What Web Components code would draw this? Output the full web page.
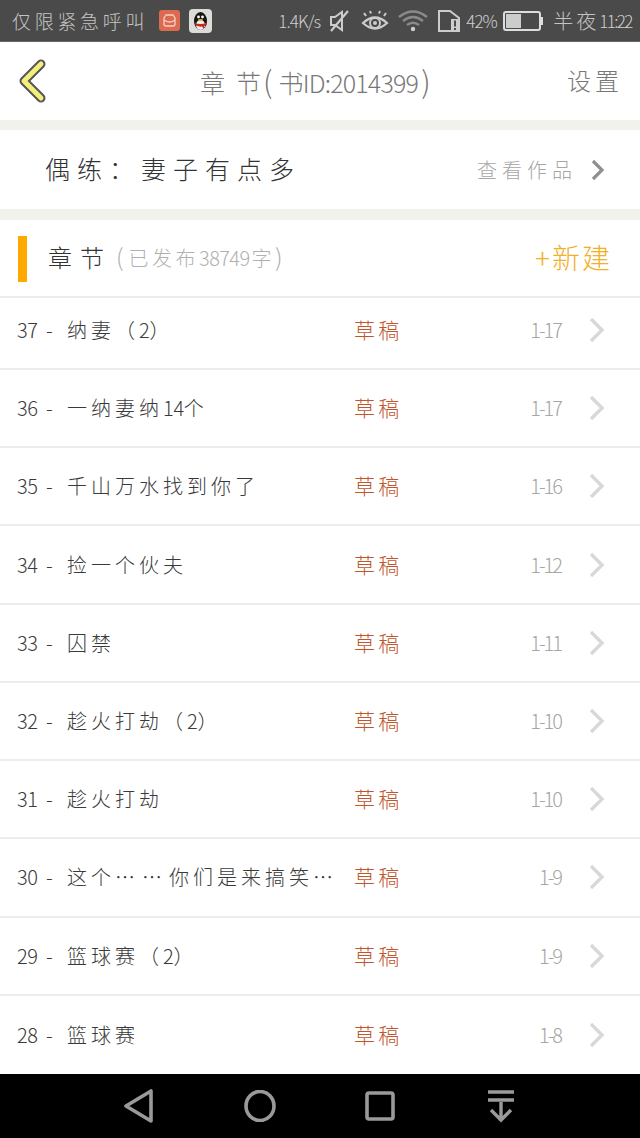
<!DOCTYPE html>
<html lang="zh"><head><meta charset="utf-8">
<style>
html,body{margin:0;padding:0;background:#fff}
body{width:640px;height:1138px;overflow:hidden;display:flex;flex-direction:column;font-family:"Noto Sans CJK SC","Noto Sans",sans-serif;font-weight:300}
chapter-list{flex:1}
</style></head><body>
<status-bar></status-bar>
<nav-header></nav-header>
<book-card></book-card>
<section-head></section-head>
<chapter-list>
<chapter-row class="first" num="37" name="纳妻&#xFF08;2&#xFF09;" range="1-17"></chapter-row>
<chapter-row num="36" name="一纳妻纳14个" range="1-17"></chapter-row>
<chapter-row num="35" name="千山万水找到你了" range="1-16"></chapter-row>
<chapter-row num="34" name="捡一个伙夫" range="1-12"></chapter-row>
<chapter-row num="33" name="囚禁" range="1-11"></chapter-row>
<chapter-row num="32" name="趁火打劫&#xFF08;2&#xFF09;" range="1-10"></chapter-row>
<chapter-row num="31" name="趁火打劫" range="1-10"></chapter-row>
<chapter-row num="30" name="这个……你们是来搞笑…" range="1-9"></chapter-row>
<chapter-row num="29" name="篮球赛&#xFF08;2&#xFF09;" range="1-9"></chapter-row>
<chapter-row num="28" name="篮球赛" range="1-8"></chapter-row>
</chapter-list>
<soft-keys></soft-keys>
<script>
function def(name,html){customElements.define(name,class extends HTMLElement{
  constructor(){super();this.attachShadow({mode:'open'});if(typeof html!=='function')this.shadowRoot.innerHTML=html}
  connectedCallback(){if(typeof html==='function')this.shadowRoot.innerHTML=html(this)}
})}
def('status-bar',`<style>
:host{display:flex;align-items:center;height:42px;box-sizing:border-box;background:#4a4a4a;border-bottom:1px solid #666;color:#cfcfcf;font-size:17px;padding:0 0 0 12px;flex:none}
.t{font-size:19px;letter-spacing:3.700px;white-space:nowrap;color:#c4c4c4}
svg{display:block;flex:none}
.sp{letter-spacing:-.9px;white-space:nowrap}
</style>
<span class="t">仅限紧急呼叫</span>
<svg style="margin-left:11px" width="21" height="21" viewBox="0 0 21 21"><rect width="21" height="21" rx="3" fill="#dc6a50"/><path d="M5 8l2-3h7l2 3v6a2 2 0 0 1-2 2H7a2 2 0 0 1-2-2zM5 10q5.500 4 11 0" fill="none" stroke="#f6cfc4" stroke-width="1.300"/></svg>
<svg style="margin-left:9px" width="23" height="24" viewBox="0 0 23 24"><rect width="23" height="24" rx="4" fill="#dcdcd8"/><ellipse cx="11.500" cy="12" rx="6.500" ry="9" fill="#151515"/><ellipse cx="11.500" cy="16" rx="4.500" ry="5" fill="#eee"/><path d="M5 13.500q6.500 3 13 0l-.5 2.500-2.500 1v3l-2-2.500q-3 .5-6-1z" fill="#c8271f"/><circle cx="9.500" cy="8" r="1.400" fill="#fff"/><circle cx="13.500" cy="8" r="1.400" fill="#fff"/><ellipse cx="11.500" cy="11" rx="2.500" ry="1.100" fill="#e8b22e"/></svg>
<span class="sp" style="margin-left:66px;width:42px">1.4K/s</span>
<svg style="margin-left:8px" width="22" height="24" viewBox="0 0 22 24"><path d="M3 8h4l7-5v18l-7-5H3z" fill="none" stroke="#ccc" stroke-width="2"/><path d="M20 2L3 22" stroke="#ccc" stroke-width="2.200"/></svg>
<svg style="margin-left:11px" width="28" height="22" viewBox="0 0 28 22"><path d="M2 13q12-11 24 0q-12 11-24 0z" fill="none" stroke="#ccc" stroke-width="2.200"/><circle cx="14" cy="13" r="5" fill="none" stroke="#ccc" stroke-width="2"/><circle cx="14" cy="13" r="2" fill="#ccc"/><path d="M5 6L3 3M10 3.500L9 1M18 3.500L19 1M23 6l2-3" stroke="#ccc" stroke-width="2"/></svg>
<svg style="margin-left:9px" width="30" height="24" viewBox="0 0 30 24"><path d="M1 8q14-11 28 0M5 12q10-8 20 0M9 16q6-4.500 12 0" fill="none" stroke="#8a8a8a" stroke-width="2.500"/><circle cx="15" cy="20" r="2.200" fill="#ccc"/></svg>
<svg style="margin-left:10px" width="22" height="22" viewBox="0 0 22 22"><path d="M1 1h11l9 7v13H1z" fill="none" stroke="#ccc" stroke-width="2"/><rect x="13" y="9" width="8" height="12" fill="#ccc"/><path d="M17 10.500v6M17 18v2" stroke="#4a4a4a" stroke-width="2"/></svg>
<span class="sp" style="margin-left:6px;width:34px">42%</span>
<svg style="margin-left:3px" width="41" height="20" viewBox="0 0 41 20"><rect x="1" y="1" width="36" height="18" rx="2" fill="none" stroke="#ddd" stroke-width="2"/><rect x="3" y="3" width="15" height="14" fill="#ccc"/><rect x="38" y="6" width="2" height="8" fill="#ddd"/></svg>
<span class="t" style="margin-left:9px;font-size:20px;letter-spacing:3px">半夜</span><span class="sp" style="letter-spacing:-1.600px">11:22</span>`);

def('nav-header',`<style>
:host{display:grid;grid-template-columns:200px 1fr auto;align-items:center;height:78px;background:#fff;flex:none;color:#777}
svg{margin-left:17px;display:block}
.t{font-size:25px;white-space:nowrap;line-height:36px}
.a{letter-spacing:11px}
.p{font-size:30px;letter-spacing:6px;margin-left:2px}
.b{letter-spacing:-.8px}
.e{font-size:30px;margin-left:3px}
.s{font-size:24px;letter-spacing:4px;padding-right:17px;margin-top:-3px}
</style>
<svg width="32" height="46" viewBox="0 0 32 46"><path d="M24 6L7 23l17 17" fill="none" stroke="#555" stroke-width="9" stroke-linecap="round" stroke-linejoin="round"/><path d="M24 6L7 23l17 17" fill="none" stroke="#f5ee7a" stroke-width="5" stroke-linecap="round" stroke-linejoin="round"/></svg>
<span class="t"><span class="a">章</span>节<span class="p">(</span><span class="b">书ID:2014399</span><span class="e">)</span></span><span class="s">设置</span>`);

def('book-card',`<style>
:host{display:flex;align-items:center;height:79px;background:#fff;border-top:10px solid #f2f2ec;border-bottom:11px solid #f2f2ec;flex:none;padding-left:45px}
.n{font-size:25px;letter-spacing:7px;color:#333;white-space:nowrap;margin-top:-3px}
.m{margin-left:auto;font-size:20px;letter-spacing:5px;color:#a6a6a6;white-space:nowrap}
svg{margin:0 35px 0 14px;display:block}
</style><span class="n">偶练\uFF1A妻子有点多</span><span class="m">查看作品</span>
<svg width="14" height="22" viewBox="0 0 14 22"><path d="M2 2l9 9-9 9" fill="none" stroke="#909090" stroke-width="3.200"/></svg>`);

def('section-head',`<style>
:host{display:flex;align-items:center;height:76px;background:#fff;border-bottom:2px solid #ededed;flex:none;padding-left:18px}
i{width:9px;height:46px;background:#ffa800;display:block;margin-top:1px}
.h{margin-left:21px;font-size:24px;letter-spacing:8px;color:#333;white-space:nowrap;margin-top:-3px}
.c{margin-left:4px;font-size:20px;line-height:32px;color:#b0b0b0;white-space:nowrap;letter-spacing:3.500px;margin-top:-2px}
.c .o{font-size:24px;letter-spacing:5px}
.c b{font-weight:inherit;letter-spacing:-.6px;margin-right:2px}
.a{margin-left:auto;padding-right:28px;font-size:28px;letter-spacing:2px;color:#f2b028;white-space:nowrap;margin-top:-2px}
</style><i></i><span class="h">章节</span><span class="c"><span class="o">(</span>已发布<b>38749</b>字<span class="o">)</span></span><span class="a">+新建</span>`);

def('chapter-list',`<style>:host{display:block;background:#fff}</style><slot></slot>`);

def('chapter-row',el=>{
const nm=(el.getAttribute('name')||'').replace(/\d+/g,m=>`<span class="d">${m}</span>`).replace(/…/g,'<span class="e">…</span>');
return `<style>
:host{display:grid;grid-template-columns:337px 105px 102px 1fr;align-items:center;height:78.220px;box-sizing:border-box;border-bottom:2px solid #ededed;padding-left:17px;background:#fff}
:host(.first){height:72px;padding-bottom:6px}
:host(:last-child){border-bottom:0}
.n{font-size:20px;letter-spacing:4px;color:#3a3a3a;white-space:nowrap;overflow:hidden;margin-top:-1px}
.d{letter-spacing:-.4px}
.e{letter-spacing:7px}
.x{margin-left:2px}
.s{font-size:21px;letter-spacing:3.200px;color:#c0562c;white-space:nowrap;margin-top:-2px}
.r{font-size:20px;letter-spacing:-2px;color:#a6a6a6;text-align:right;white-space:nowrap;margin-top:-1px}
svg{display:block;margin-left:28px}
</style><span class="n"><span class="d">${el.getAttribute('num')||''}</span> - <span class="x">${nm}</span></span><span class="s">草稿</span><span class="r">${el.getAttribute('range')||''}</span>
<svg width="16" height="26" viewBox="0 0 16 26"><path d="M2 2l11 11L2 24" fill="none" stroke="#d8d8d8" stroke-width="3.400"/></svg>`});

def('soft-keys',`<style>
:host{display:flex;align-items:center;height:65px;background:#000;flex:none;padding-left:124px}
svg{display:block;flex:none}
</style>
<svg width="30" height="34" viewBox="0 0 30 34"><path d="M27 2v30L2 17z" fill="none" stroke="#9a9a9a" stroke-width="3.600" stroke-linejoin="round"/></svg>
<svg style="margin-left:90px" width="32" height="32" viewBox="0 0 32 32"><ellipse cx="16" cy="16" rx="14" ry="14.500" fill="none" stroke="#9a9a9a" stroke-width="3.600"/></svg>
<svg style="margin-left:89px" width="30" height="30" viewBox="0 0 30 30"><rect x="2" y="2" width="26" height="26" rx="2" fill="none" stroke="#9a9a9a" stroke-width="3.600"/></svg>
<svg style="margin-left:91px" width="30" height="34" viewBox="0 0 30 34"><path d="M2 3h26M2 11h26M15 13v19M5 21l10 10 10-10" fill="none" stroke="#9a9a9a" stroke-width="3.400"/></svg>`);
</script>
</body></html>
